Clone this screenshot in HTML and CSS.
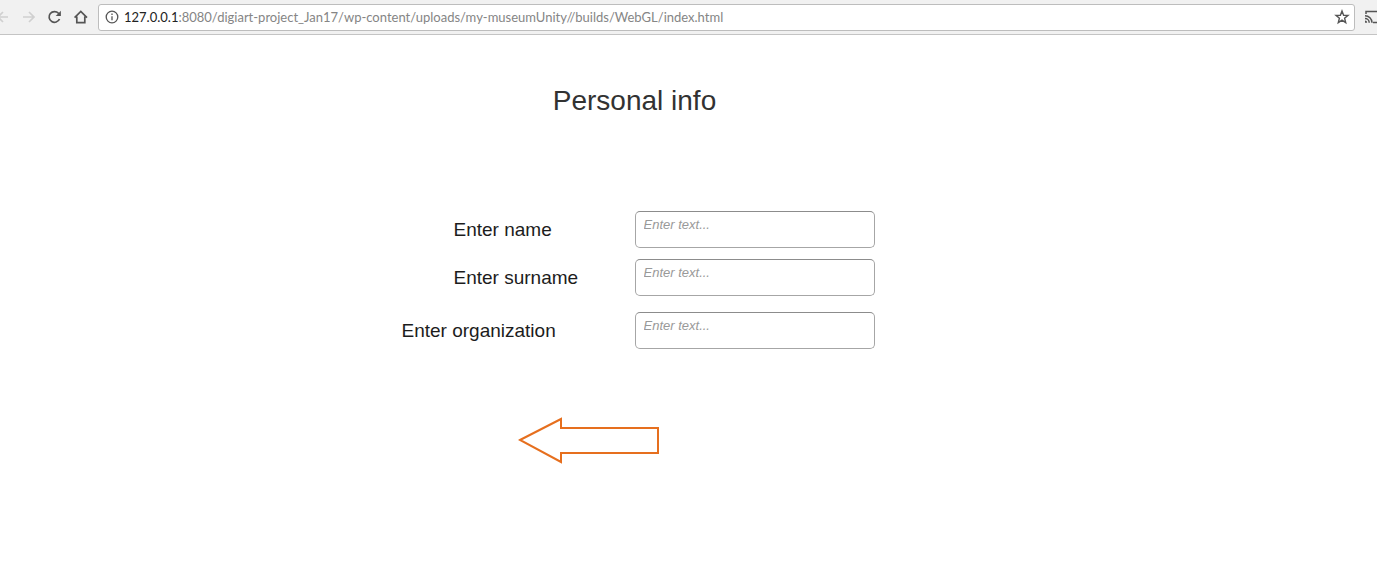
FILE: index.html
```html
<!DOCTYPE html>
<html lang="en">
<head>
<meta charset="utf-8">
<title>Personal info</title>
<link rel="stylesheet" href="styles.css">
</head>
<body>
<header class="toolbar">
  <button class="tool back faded" type="button" aria-label="Back">
    <svg width="16" height="16" viewBox="0 0 16 16"><path d="M16 8H6M11 3L6 8l5 5"/></svg>
  </button>
  <button class="tool forward faded" type="button" aria-label="Forward">
    <svg width="16" height="16" viewBox="0 0 16 16"><path d="M3 8h11M9 3l5 5-5 5"/></svg>
  </button>
  <button class="tool" type="button" aria-label="Reload">
    <svg width="16" height="16" viewBox="0 0 16 16"><path d="M13.500 10A5.400 5.400 0 1 1 12.500 4.300l1 1"/><path class="solid" d="M14.900 1.800v5.200H9.700z"/></svg>
  </button>
  <button class="tool" type="button" aria-label="Home">
    <svg width="16" height="16" viewBox="0 0 16 16"><path d="M2.600 8.600L8.800 2.400l6.200 6.200M4.800 7.500v6.200h8V7.500"/></svg>
  </button>
  <div class="address">
    <svg class="info" width="14" height="14" viewBox="0 0 14 14"><circle cx="7" cy="7" r="5.8"/><path d="M7 6.3v4M7 3.6v1.5"/></svg>
    <div class="url" role="textbox" aria-label="Address"><span class="host">127.0.0.1</span>:8080/digiart-project_Jan17/wp-content/uploads/my-museumUnity//builds/WebGL/index.html</div>
    <button class="tool" type="button" aria-label="Bookmark">
      <svg width="16" height="16" viewBox="0 0 16 16"><path d="M8 2l1.6 4.2 4.4.2-3.4 2.8 1.1 4.4L8 11.1l-3.7 2.5 1.1-4.4L2 6.4l4.4-.2z"/></svg>
    </button>
  </div>
  <button class="tool cast" type="button" aria-label="Cast">
    <svg width="18" height="16" viewBox="0 0 18 16"><path d="M2 5V2.5h14v11h-7M1 6.7a7 7 0 0 1 7 7M1 9.5a4.2 4.2 0 0 1 4.2 4.2"/><path class="solid" d="M1 11.5a2.2 2.2 0 0 1 2.2 2.2H1z"/></svg>
  </button>
</header>
<main class="page">
  <h1 class="title">Personal info</h1>
  <form class="form">
    <div class="row">
      <label class="label" for="name">Enter name</label>
      <input class="field" id="name" type="text" placeholder="Enter text...">
    </div>
    <div class="row">
      <label class="label" for="surname">Enter surname</label>
      <input class="field" id="surname" type="text" placeholder="Enter text...">
    </div>
    <div class="row row-last">
      <label class="label label-wide" for="organization">Enter organization</label>
      <input class="field" id="organization" type="text" placeholder="Enter text...">
    </div>
  </form>
  <button class="arrow" type="button" aria-label="Previous">
    <svg width="142" height="48" viewBox="0 0 142 48"><path d="M2 24L43 3v9h97v25H43v9z"/></svg>
  </button>
</main>
</body>
</html>
```
FILE: styles.css
```css
* {
  box-sizing: border-box;
}

body {
  margin: 0;
  background: #fff;
  font-family: "Liberation Sans", Arial, sans-serif;
  overflow-x: hidden;
}

button {
  padding: 0;
  border: 0;
  background: none;
}

svg {
  display: block;
  fill: none;
}

.toolbar {
  display: flex;
  align-items: center;
  height: 35px;
  background: #f1f1f1;
  border-bottom: 1px solid #c4c4c4;
  overflow: hidden;
}

.tool {
  flex: none;
  margin-right: 10px;
  stroke: #555;
  stroke-width: 1.7;
}

.tool .solid {
  fill: #555;
  stroke: none;
}

.back {
  margin-left: -8px;
  margin-right: 12px;
}

.faded {
  stroke: #d0d0d0;
}

.address {
  flex: 1;
  display: flex;
  align-items: center;
  min-width: 0;
  height: 27px;
  padding-left: 6px;
  background: #fff;
  border: 1px solid #bdbdbd;
  border-radius: 3px;
}

.address .tool {
  margin-right: 4px;
  stroke-width: 1.4;
}

.info {
  flex: none;
  margin-right: 5px;
  stroke: #555;
  stroke-width: 1.3;
}

.url {
  flex: 1;
  min-width: 0;
  overflow: hidden;
  white-space: nowrap;
  font-family: Lato, "Open Sans", sans-serif;
  font-size: 13px;
  line-height: 20px;
  color: #858585;
}

.host {
  color: #222;
}

.cast {
  margin: 0 -5px 0 9px;
  stroke-width: 1.5;
}

.page {
  display: flex;
  flex-direction: column;
  align-items: center;
  padding: 49px 108px 32px 0;
}

.title {
  margin: 0 0 94px;
  font-size: 28px;
  font-weight: 400;
  line-height: 33px;
  color: #323232;
}

.form {
  display: flex;
  flex-direction: column;
  gap: 11px;
  width: 480px;
  max-width: 100%;
}

.row {
  display: flex;
  align-items: center;
}

.row-last {
  margin-top: 5px;
}

.label {
  flex: 1;
  padding-left: 59px;
  font-size: 19px;
  line-height: 22px;
  color: #1c1c1c;
}

.label-wide {
  padding-left: 7px;
}

.field {
  width: 240px;
  height: 37px;
  padding: 0 8px 10px;
  border: 1px solid #a6a6a6;
  border-top-color: #8c8c8c;
  border-radius: 5px;
  background: #fff;
  font-family: inherit;
  font-size: 13px;
  color: #323232;
}

.field::placeholder {
  font-style: italic;
  color: #999;
  opacity: 1;
}

.arrow {
  margin-top: 67px;
  margin-right: 91px;
  stroke: #e66f1e;
  stroke-width: 2;
}
```
